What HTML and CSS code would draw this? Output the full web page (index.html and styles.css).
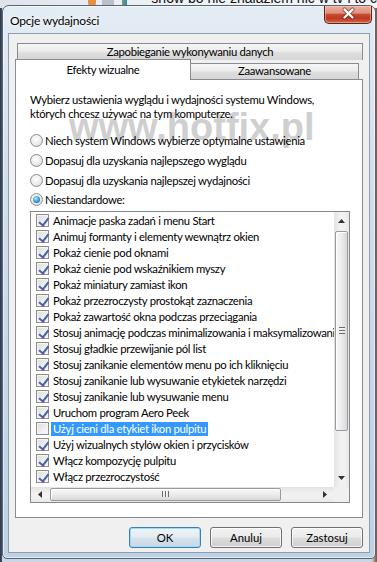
FILE: index.html
```html
<!DOCTYPE html>
<html lang="pl">
<head>
<meta charset="utf-8">
<title>Opcje wydajności</title>
<link rel="stylesheet" href="styles.css">
</head>
<body>
<div class="desktop">
  <div class="desk-top">
    <span class="di di-rss"></span><span class="di di-gray"></span><span class="di di-green"></span>
    <span class="desk-text">show bo nie znalazłem nic w tv i to c</span>
  </div>
  <div class="window">
    <div class="titlebar">
      <span class="title">Opcje wydajności</span>
      <div class="close">
        <svg width="46" height="17" viewBox="0 0 46 17">
          <path d="M19.5 3.5 L27.5 11.5 M27.5 3.5 L19.5 11.5" stroke="#5a1d12" stroke-width="4.2" stroke-linecap="round" opacity="0.55"/>
          <path d="M19.5 3.5 L27.5 11.5 M27.5 3.5 L19.5 11.5" stroke="#ffffff" stroke-width="2.4" stroke-linecap="round"/>
        </svg>
      </div>
    </div>
    <div class="client">
      <div class="tabrow1"><div class="tab tab-back">Zapobieganie wykonywaniu danych</div></div>
      <div class="tabrow2"><div class="tab tab-sel">Efekty wizualne</div><div class="tab tab-adv">Zaawansowane</div></div>
      <div class="panel">
        <div class="watermark">www.hotfix.pl</div>
        <p class="intro">Wybierz ustawienia wyglądu i wydajności systemu Windows,<br>których chcesz używać na tym komputerze.</p>
        <div class="radios">
          <div class="radio"><span class="rb"></span>Niech system Windows wybierze optymalne ustawienia</div>
          <div class="radio"><span class="rb"></span>Dopasuj dla uzyskania najlepszego wyglądu</div>
          <div class="radio"><span class="rb"></span>Dopasuj dla uzyskania najlepszej wydajności</div>
          <div class="radio"><span class="rb on"></span>Niestandardowe:</div>
        </div>
        <div class="listbox">
          <div class="viewport">
            <ul class="items">
              <li class="item"><span class="cb on"></span><span class="lbl">Animacje paska zadań i menu Start</span></li>
              <li class="item"><span class="cb on"></span><span class="lbl">Animuj formanty i elementy wewnątrz okien</span></li>
              <li class="item"><span class="cb on"></span><span class="lbl">Pokaż cienie pod oknami</span></li>
              <li class="item"><span class="cb on"></span><span class="lbl">Pokaż cienie pod wskaźnikiem myszy</span></li>
              <li class="item"><span class="cb on"></span><span class="lbl">Pokaż miniatury zamiast ikon</span></li>
              <li class="item"><span class="cb on"></span><span class="lbl">Pokaż przezroczysty prostokąt zaznaczenia</span></li>
              <li class="item"><span class="cb on"></span><span class="lbl">Pokaż zawartość okna podczas przeciągania</span></li>
              <li class="item"><span class="cb on"></span><span class="lbl">Stosuj animację podczas minimalizowania i maksymalizowania okien</span></li>
              <li class="item"><span class="cb on"></span><span class="lbl">Stosuj gładkie przewijanie pól list</span></li>
              <li class="item"><span class="cb on"></span><span class="lbl">Stosuj zanikanie elementów menu po ich kliknięciu</span></li>
              <li class="item"><span class="cb on"></span><span class="lbl">Stosuj zanikanie lub wysuwanie etykietek narzędzi</span></li>
              <li class="item"><span class="cb on"></span><span class="lbl">Stosuj zanikanie lub wysuwanie menu</span></li>
              <li class="item"><span class="cb on"></span><span class="lbl">Uruchom program Aero Peek</span></li>
              <li class="item sel"><span class="cb"></span><span class="lbl">Użyj cieni dla etykiet ikon pulpitu</span></li>
              <li class="item"><span class="cb on"></span><span class="lbl">Użyj wizualnych stylów okien i przycisków</span></li>
              <li class="item"><span class="cb on"></span><span class="lbl">Włącz kompozycję pulpitu</span></li>
              <li class="item"><span class="cb on"></span><span class="lbl">Włącz przezroczystość</span></li>
            </ul>
          </div>
          <div class="vscroll">
            <div class="sbtn"><svg width="7" height="4" viewBox="0 0 7 4"><polygon points="0,4 3.5,0 7,4" fill="#333"/></svg></div>
            <div class="vtrack">
              <div class="vthumb"><span class="grip-v"></span></div>
            </div>
            <div class="sbtn"><svg width="7" height="4" viewBox="0 0 7 4"><polygon points="0,0 3.5,4 7,0" fill="#333"/></svg></div>
          </div>
          <div class="hscroll">
            <div class="sbtn h"><svg width="4" height="7" viewBox="0 0 4 7"><polygon points="4,0 0,3.5 4,7" fill="#333"/></svg></div>
            <div class="htrack">
              <div class="hthumb"><span class="grip-h"></span></div>
            </div>
            <div class="sbtn h"><svg width="4" height="7" viewBox="0 0 4 7"><polygon points="0,0 4,3.5 0,7" fill="#333"/></svg></div>
          </div>
          <div class="corner"></div>
        </div>
      </div>
      <div class="buttons">
        <button class="btn default">OK</button>
        <button class="btn">Anuluj</button>
        <button class="btn">Zastosuj</button>
      </div>
    </div>
  </div>
</div>
</body>
</html>
```

FILE: styles.css
```css
* { box-sizing: border-box; margin: 0; padding: 0; }
html, body { width: 377px; height: 562px; overflow: hidden; }
body {
  font-family: Lato, "Liberation Sans", sans-serif;
  font-size: 11.3px;
  letter-spacing: -0.3px;
  color: #000;
  background: #cfd9e4;
}
.desktop {
  position: relative;
  width: 377px;
  height: 562px;
  overflow: hidden;
  background: linear-gradient(90deg, #2c3848 0, #44536a 2px, #c9d6e3 2px, #c9d6e3 372px, #a07866 375px, #7d5546 377px);
}
.desk-top {
  position: absolute;
  left: 0; top: 0;
  width: 377px; height: 8px;
  background: linear-gradient(90deg, #dfe4ea, #eef1f4 40%, #f4f5f6);
  display: flex;
  align-items: flex-start;
  overflow: hidden;
}
.di { display: block; height: 6px; }
.di-rss { margin-left: 88px; width: 20px; background: #e9913a; border-radius: 0 0 3px 3px; }
.di-gray { margin-left: 6px; width: 30px; background: #b9c0c8; }
.di-green { margin-left: 8px; width: 14px; background: linear-gradient(90deg, #6aa84f, #3d7fc2); }
.desk-text {
  margin-left: 24px;
  margin-top: -9px;
  font-family: "Liberation Sans", sans-serif;
  font-size: 14px;
  line-height: 14px;
  letter-spacing: 0;
  color: #111;
  white-space: nowrap;
}
.window {
  position: absolute;
  left: 2px; top: 5px;
  width: 374px; height: 554px;
  border: 1px solid #55667a;
  border-radius: 7px 7px 5px 5px;
  background: linear-gradient(180deg, #e4ecf4 0%, #d2dfec 30%, #c6d6e8 70%, #bfd1e5 100%);
  box-shadow: inset 0 0 0 1px rgba(255,255,255,0.55);
  padding: 0 5px 5px 5px;
  display: flex;
  flex-direction: column;
}
.titlebar {
  height: 27px;
  display: flex;
  justify-content: space-between;
  align-items: flex-start;
  flex: none;
}
.title {
  margin-top: 7px;
  margin-left: 2px;
  font-size: 12px;
  letter-spacing: -0.2px;
  line-height: 15px;
  text-shadow: 0 0 6px rgba(255,255,255,0.95), 0 0 3px rgba(255,255,255,0.9);
}
.close {
  width: 48px;
  height: 18px;
  margin-right: -2px;
  border: 1px solid #5e2418;
  border-top: none;
  border-radius: 0 0 5px 5px;
  background: linear-gradient(180deg, #eab3a5 0%, #dd8e7b 42%, #c74a31 50%, #bb3a20 72%, #d4664b 100%);
  box-shadow: inset 0 0 0 1px rgba(255,210,200,0.45);
  display: flex;
  align-items: flex-start;
  justify-content: center;
}
.client {
  flex: 1;
  background: #f0f0f0;
  border: 1px solid #8e9eb2;
  padding: 0 6px 4px 6px;
  display: flex;
  flex-direction: column;
}
.tab {
  border: 1px solid #898c95;
  background: linear-gradient(180deg, #f6f6f6 0%, #ececec 45%, #dedede 55%, #d6d6d6 100%);
  text-align: center;
  white-space: nowrap;
}
.tabrow1 {
  margin-top: 9px;
  height: 17px;
  padding-left: 2px;
  display: flex;
}
.tab-back {
  flex: 1;
  height: 17px;
  line-height: 15px;
  border-bottom: none;
}
.tabrow2 {
  height: 19px;
  display: flex;
  align-items: flex-end;
  position: relative;
  z-index: 2;
}
.tab-sel {
  width: 176px;
  height: 21px;
  margin-bottom: -1px;
  background: #fff;
  border-bottom: none;
  line-height: 19px;
}
.tab-adv {
  width: 169px;
  height: 16px;
  margin-left: -1px;
  line-height: 14px;
  border-bottom: none;
}
.panel {
  position: relative;
  height: 439px;
  background: #fff;
  border: 1px solid #898c95;
  padding: 13px 0 0 14px;
  flex: none;
}
.intro {
  position: relative;
  line-height: 14px;
  white-space: nowrap;
}
.radios {
  position: relative;
  margin-top: 10px;
  display: flex;
  flex-direction: column;
}
.radio {
  height: 19.7px;
  display: flex;
  align-items: center;
  gap: 2px;
  white-space: nowrap;
}
.rb {
  width: 13px;
  height: 13px;
  border-radius: 50%;
  border: 1px solid #8b8e92;
  background: radial-gradient(circle at 45% 40%, #ffffff 0%, #eeeeee 45%, #d2d2d2 100%);
  position: relative;
  flex: none;
}
.rb.on::after {
  content: "";
  position: absolute;
  left: 2px; top: 2px;
  width: 7px; height: 7px;
  border-radius: 50%;
  background: radial-gradient(circle at 40% 35%, #b8ecfb 0%, #4aa7d8 45%, #1b4e7e 100%);
}
.listbox {
  position: relative;
  margin-top: 1px;
  width: 320px;
  height: 292px;
  border: 1px solid #828790;
  background: #fff;
  display: grid;
  grid-template-columns: 1fr 15px;
  grid-template-rows: 1fr 15px;
}
.viewport {
  overflow: hidden;
  padding-top: 1px;
}
.items { list-style: none; }
.item {
  height: 16px;
  display: flex;
  align-items: center;
  padding-left: 5px;
  white-space: nowrap;
}
.cb {
  width: 13px;
  height: 13px;
  flex: none;
  border: 1px solid #8f8f8f;
  background: linear-gradient(135deg, #dcdcdc 0%, #f0f0f0 60%, #fbfbfb 100%);
  box-shadow: inset 0 0 0 1px #f4f4f4;
  margin-right: 2px;
  position: relative;
}
.cb.on::after {
  content: "";
  position: absolute;
  left: 3.5px; top: 0.5px;
  width: 4px; height: 7.5px;
  border-right: 2px solid #4a5fae;
  border-bottom: 2px solid #4a5fae;
  transform: rotate(38deg);
}
.lbl {
  padding: 0 2px;
  line-height: 14px;
}
.item.sel .lbl {
  background: #3399ff;
  color: #fff;
}
.vscroll {
  grid-column: 2;
  grid-row: 1;
  display: flex;
  flex-direction: column;
  background: linear-gradient(90deg, #e3e3e3, #f1f1f1 40%, #f1f1f1 70%, #e8e8e8);
}
.sbtn {
  height: 18px;
  display: flex;
  align-items: center;
  justify-content: center;
  flex: none;
}
.sbtn.h {
  width: 18px;
  height: auto;
}
.vtrack {
  flex: 1;
  padding: 1px 1px 0 1px;
}
.vthumb {
  height: 200px;
  border: 1px solid #979a9e;
  border-radius: 2px;
  background: linear-gradient(90deg, #f7f7f7 0%, #ececec 50%, #d8d8d8 100%);
  box-shadow: inset 1px 1px 0 #ffffff;
  display: flex;
  align-items: center;
  justify-content: center;
}
.grip-v {
  width: 6px;
  height: 7px;
  background: repeating-linear-gradient(180deg, #6c6c6c 0 1px, #f6f6f6 1px 2px, transparent 2px 3px);
}
.hscroll {
  grid-column: 1;
  grid-row: 2;
  display: flex;
  background: linear-gradient(180deg, #e3e3e3, #f1f1f1 40%, #f1f1f1 70%, #e8e8e8);
}
.htrack {
  flex: 1;
  padding: 1px 0 1px 1px;
}
.hthumb {
  width: 231px;
  height: 100%;
  border: 1px solid #979a9e;
  border-radius: 2px;
  background: linear-gradient(180deg, #f7f7f7 0%, #ececec 50%, #d8d8d8 100%);
  box-shadow: inset 1px 1px 0 #ffffff;
  display: flex;
  align-items: center;
  justify-content: center;
}
.grip-h {
  width: 7px;
  height: 6px;
  background: repeating-linear-gradient(90deg, #6c6c6c 0 1px, #f6f6f6 1px 2px, transparent 2px 3px);
}
.corner {
  grid-column: 2;
  grid-row: 2;
  background: #f0f0f0;
}
.watermark {
  position: absolute;
  left: 53px;
  top: 28px;
  font-family: "Liberation Sans", sans-serif;
  font-weight: bold;
  font-size: 38px;
  line-height: 38px;
  letter-spacing: 0;
  color: #cfcfcf;
  text-shadow: 0 0 2px rgba(255,255,255,0.9);
  pointer-events: none;
  white-space: nowrap;
}
.buttons {
  margin-top: 9px;
  display: flex;
  justify-content: flex-end;
  gap: 9px;
}
.btn {
  width: 72px;
  height: 21px;
  border: 1px solid #707070;
  border-radius: 3px;
  background: linear-gradient(180deg, #f2f2f2 0%, #ebebeb 48%, #dddddd 52%, #cfcfcf 100%);
  box-shadow: inset 0 0 0 1px rgba(255,255,255,0.75);
  font: inherit;
  color: #000;
}
.btn.default {
  border-color: #3c7fb1;
  background: linear-gradient(180deg, #eef4f9 0%, #e4ecf3 48%, #d6e2ec 52%, #c9d7e4 100%);
  box-shadow: inset 0 0 0 1px #9fdaf6;
}
```
